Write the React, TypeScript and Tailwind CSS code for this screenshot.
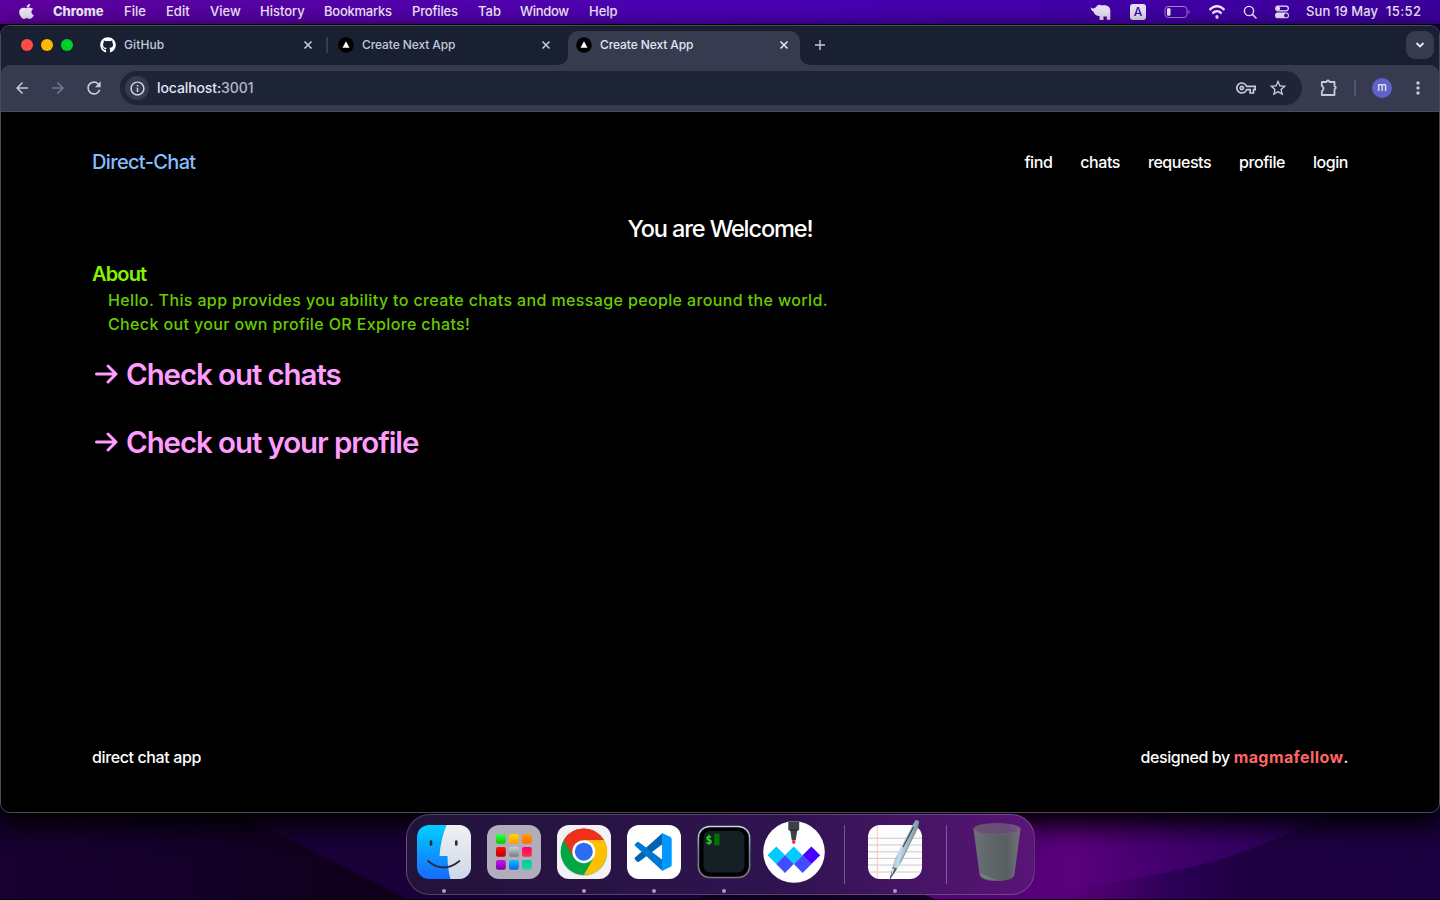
import React from "react";
import { FaApple, FaGithub, FaWifi } from "react-icons/fa";
import {
  MdArrowBack,
  MdArrowForward,
  MdInfoOutline,
  MdMoreVert,
  MdOutlineVpnKey,
  MdRefresh,
  MdStarBorder,
} from "react-icons/md";

function Wallpaper() {
  return (
    <svg className="absolute inset-0 h-full w-full" viewBox="0 0 1440 900" preserveAspectRatio="none">
      <defs>
        <linearGradient id="wBase" x1="0" x2="1" y1="0" y2="0">
          <stop offset="0" stopColor="#180030" />
          <stop offset="0.1" stopColor="#15002c" />
          <stop offset="0.24" stopColor="#10001c" />
          <stop offset="0.5" stopColor="#100020" />
          <stop offset="1" stopColor="#1c0042" />
        </linearGradient>
        <linearGradient id="wUpper" gradientUnits="userSpaceOnUse" x1="930" x2="1310" y1="0" y2="0">
          <stop offset="0" stopColor="#480070" />
          <stop offset="0.38" stopColor="#5a007c" />
          <stop offset="0.65" stopColor="#40006c" />
          <stop offset="1" stopColor="#260058" />
        </linearGradient>
        <linearGradient id="wLower" gradientUnits="userSpaceOnUse" x1="930" x2="1440" y1="0" y2="0">
          <stop offset="0" stopColor="#580078" />
          <stop offset="0.28" stopColor="#580078" />
          <stop offset="0.48" stopColor="#2b0055" />
          <stop offset="0.62" stopColor="#1e0042" />
          <stop offset="1" stopColor="#1b0040" />
        </linearGradient>
      </defs>
      <rect width="1440" height="900" fill="url(#wBase)" />
      <path d="M230 812L290 840L410 900L700 900L700 812Z" fill="#190036" />
      <path d="M900 812H1440V900H936Q925 893 900 890Z" fill="url(#wLower)" />
      <path d="M900 812H1335Q1260 850 1195 866T1070 888L900 890Z" fill="url(#wUpper)" />
      <rect y="899" width="1440" height="1" fill="#08000f" />
    </svg>
  );
}

function ElephantIcon() {
  return (
    <svg className="h-[18px] w-[22px]" viewBox="0 0 22 18" fill="#ebe2f7">
      <path d="M0.500 4.200C2.600 6.200 4.600 5.800 6.500 3.600C7.400 2 9.500 0.800 11.800 2.400C14.500 2 17.500 2.200 19.200 4.200C20.400 5.600 20.500 8 20.300 11V16.800H16.800V13.600H13.500V17H9.600V13.200C6.500 13.200 4.400 11.800 3.300 8.600C2 7.800 0.900 6.400 0.500 4.200Z" />
    </svg>
  );
}

function MenuBar() {
  return (
    <div className="relative flex h-6 shrink-0 items-center bg-gradient-to-r from-[#5c009c] via-[#4a00b4] to-[#3b009c] text-[13px] font-medium text-[#f1e8fb]">
      <div className="w-[53px] pb-0.5 pl-[19px]">
        <FaApple className="h-[17px] w-[15px]" preserveAspectRatio="none" />
      </div>
      <div className="flex pb-px whitespace-nowrap leading-[23px]">
        <div className="w-[71px] font-extrabold tracking-[-0.1px]">Chrome</div>
        <div className="w-[42px]">File</div>
        <div className="w-[44px]">Edit</div>
        <div className="w-[50px]">View</div>
        <div className="w-[64px]">History</div>
        <div className="w-[88px] tracking-[-0.25px]">Bookmarks</div>
        <div className="w-[66px] tracking-[-0.15px]">Profiles</div>
        <div className="w-[42px]">Tab</div>
        <div className="w-[69px] tracking-[-0.3px]">Window</div>
        <div>Help</div>
      </div>
      <div className="ml-auto flex items-center">
        <div className="w-[40px]"><ElephantIcon /></div>
        <div className="mr-[18px] flex h-4 w-4 items-center justify-center rounded-[3px] bg-[#ebe2f7] text-xs font-medium text-[#3d00a0]">A</div>
        <svg className="mr-[18px] h-3 w-[27px]" viewBox="0 0 27 12" fill="none">
          <rect x="1" y="0.5" width="22" height="11" rx="3" stroke="#a484d0" />
          <rect x="3" y="2.3" width="3.5" height="7.4" rx="1" fill="#f1e8fb" />
          <path d="M24.5 4Q27 6 24.5 8Z" fill="#a484d0" />
        </svg>
        <FaWifi className="mr-[18px] mb-px h-[16px] w-4" preserveAspectRatio="none" />
        <svg className="mr-[18px] h-[14px] w-[14px]" viewBox="0 0 14 14" fill="none" stroke="#f1e8fb" strokeLinecap="round">
          <circle cx="6" cy="6" r="4.6" strokeWidth="1.4" />
          <path d="M9.5 9.5L13 13" strokeWidth="1.7" />
        </svg>
        <svg className="mr-[17px] h-[14px] w-[14px]" viewBox="0 0 15 14" fill="none">
          <rect x="0.7" y="0.7" width="13.6" height="5" rx="2.5" stroke="#f1e8fb" strokeWidth="1.3" />
          <circle cx="3.4" cy="3.2" r="2" fill="#f1e8fb" />
          <rect x="0" y="7.6" width="15" height="6.2" rx="3.1" fill="#f1e8fb" />
          <circle cx="11.8" cy="10.7" r="2" fill="#4000a4" />
        </svg>
        <div className="w-[80px] whitespace-nowrap tracking-[0.1px]">Sun 19 May</div>
        <div className="w-[54px] tracking-[0.4px]">15:52</div>
      </div>
    </div>
  );
}

function NextIcon() {
  return (
    <svg className="h-4 w-4 shrink-0" viewBox="0 0 16 16">
      <circle cx="8" cy="8" r="7.8" fill="#000" />
      <path d="M8 4.2L11.5 10.7H4.5Z" fill="#fff" />
    </svg>
  );
}

function CloseIcon() {
  return (
    <svg className="h-[14px] w-[14px]" viewBox="0 0 14 14" stroke="currentColor" strokeWidth="1.6">
      <path d="M3.500 3.500L10.500 10.500M10.500 3.500L3.500 10.500" />
    </svg>
  );
}

function TabStrip() {
  return (
    <div className="flex h-[39px] items-start bg-[#182031] pt-[5px] text-xs text-[#c3c9dc]">
      <div className="flex h-[28px] items-center gap-2 pl-5">
        <div className="h-3 w-3 rounded-full bg-[#ff4b42]" />
        <div className="h-3 w-3 rounded-full bg-[#ffb900]" />
        <div className="h-3 w-3 rounded-full bg-[#00cf2a]" />
      </div>
      <div className="flex h-[28px] w-[255px] items-center pl-[27px]">
        <FaGithub className="h-4 w-4 text-white" />
        <span className="ml-2 flex-1 tracking-[0.1px] [font-weight:450]">GitHub</span>
        <CloseIcon />
        <span className="ml-[11px] h-4 w-[2px] bg-[#353c51]" />
      </div>
      <div className="flex h-[28px] w-[240px] items-center pl-[10px]">
        <NextIcon />
        <span className="ml-2 flex-1 tracking-[-0.1px] [font-weight:450]">Create Next App</span>
        <CloseIcon />
        <span className="w-[15px]" />
      </div>
      <div className="relative flex h-[34px] w-[232px] items-start rounded-t-[10px] bg-[#363b50] pl-2 text-[#e4e6f2]">
        <svg className="absolute -left-[10px] bottom-0 h-[10px] w-[10px]" viewBox="0 0 10 10" fill="#363b50"><path d="M10 0V10H0A10 10 0 0 0 10 0Z" /></svg>
        <svg className="absolute -right-[10px] bottom-0 h-[10px] w-[10px]" viewBox="0 0 10 10" fill="#363b50"><path d="M0 0V10H10A10 10 0 0 1 0 0Z" /></svg>
        <div className="flex h-[28px] flex-1 items-center">
          <NextIcon />
          <span className="ml-2 flex-1 tracking-[-0.1px] [font-weight:450]">Create Next App</span>
          <CloseIcon />
          <span className="w-[9px]" />
        </div>
      </div>
      <div className="flex h-[28px] w-10 items-center justify-center">
        <svg className="h-[10px] w-[10px]" viewBox="0 0 10 10" stroke="#c3c9dc" strokeWidth="1.4"><path d="M5 0V10M0 5H10" /></svg>
      </div>
      <div className="mr-[5px] ml-auto flex h-7 w-7 items-center justify-center rounded-[9px] bg-[#363b50]">
        <svg className="h-2 w-3" viewBox="0 0 12 8" fill="none" stroke="#e4e6f2" strokeWidth="1.8"><path d="M2.5 2L6 5.5L9.5 2" /></svg>
      </div>
    </div>
  );
}

function Toolbar() {
  return (
    <div className="bg-[#182031]">
      <div className="flex h-[46px] items-center rounded-t-[9px] bg-[#363b50] text-[#c7cadd]">
        <MdArrowBack className="ml-3 h-[18px] w-[18px]" />
        <MdArrowForward className="ml-[18px] h-[18px] w-[18px] text-[#757a8e]" />
        <MdRefresh className="ml-[17px] h-[20px] w-[20px]" />
        <div className="ml-[16px] flex h-[34px] w-[1182px] items-center rounded-full bg-[#1e2537] pl-[5px]">
          <div className="flex h-6 w-6 items-center justify-center rounded-full bg-[#363b50]">
            <MdInfoOutline className="h-[17px] w-[17px] text-[#dcdcea]" />
          </div>
          <div className="ml-2 flex-1 text-sm tracking-[-0.1px] text-[#e4e4f1] [font-weight:450]">
            localhost:<span className="text-[#b5b9c9]">3001</span>
          </div>
          <MdOutlineVpnKey className="mr-[12px] h-[20px] w-[20px]" />
          <MdStarBorder className="mr-[14px] h-[20px] w-[20px]" />
        </div>
        <svg className="ml-[18px] h-[18px] w-[18px]" viewBox="0 0 18 18" fill="none" stroke="#c7cadd" strokeWidth="1.8" strokeLinejoin="round">
          <path d="M1.800 3H6.500V2.500Q8 0.500 9.500 2.500V3H14.500V7.300Q17.200 8.800 14.500 10.300V16H1.800V12.400Q5.300 9.500 1.800 6.700Z" />
        </svg>
        <span className="ml-[16px] h-4 w-[2px] bg-[#50566b]" />
        <div className="ml-4 flex h-5 w-5 items-center justify-center rounded-full bg-[#6062c8] pb-px text-[11px] text-white">m</div>
        <MdMoreVert className="ml-4 h-5 w-5" />
      </div>
      <div className="h-px bg-[#484d5e]" />
    </div>
  );
}

function ArrowIcon() {
  return (
    <svg className="h-6 w-[34px] shrink-0" viewBox="0 0 34 24" fill="none" stroke="#ff9cff" strokeWidth="3" strokeLinecap="round" strokeLinejoin="round">
      <path d="M4.500 12H24M16 4L24 12L16 20" />
    </svg>
  );
}

function Page() {
  return (
    <div className="flex flex-1 flex-col bg-black px-[91px] text-white [font-weight:450]">
      <header className="mt-[35px] flex h-[30px] items-center justify-between">
        <div className="text-xl tracking-[-0.65px] text-[#86bdff] [font-weight:550]">Direct-Chat</div>
        <nav className="flex gap-7 whitespace-nowrap tracking-[-0.45px]">
          <a>find</a>
          <a>chats</a>
          <a>requests</a>
          <a>profile</a>
          <a>login</a>
        </nav>
      </header>
      <h1 className="mt-[36px] text-center text-[23.500px] leading-8 tracking-[-1.1px] [font-weight:450]">You are Welcome!</h1>
      <h2 className="mt-[15px] text-xl leading-7 tracking-[-0.85px] text-[#86f400] [font-weight:580]">About</h2>
      <div className="pl-4 leading-6 tracking-[0.37px] text-[#68cc00]">
        <p>Hello. This app provides you ability to create chats and message people around the world.</p>
        <p>Check out your own profile OR Explore chats!</p>
      </div>
      <div className="mt-[20px] flex flex-col gap-8 text-[29.500px] leading-9 tracking-[-1.1px] text-[#ff9cff] [font-weight:570]">
        <a className="flex items-center"><ArrowIcon />Check out chats</a>
        <a className="flex items-center"><ArrowIcon />Check out your profile</a>
      </div>
      <footer className="mt-auto mb-[43px] flex h-6 items-center justify-between tracking-[-0.38px]">
        <div>direct chat app</div>
        <div className="tracking-[-0.42px]">designed by <span className="font-bold tracking-[0.42px] text-[#ff6467]">magmafellow</span>.</div>
      </footer>
    </div>
  );
}

const iconBox = "block h-[54px] w-[54px] overflow-visible";

function FinderIcon() {
  return (
    <svg className={iconBox} viewBox="0 0 54 54">
      <defs>
        <linearGradient id="fB" x2="0" y2="1"><stop stopColor="#00d0ff" /><stop offset="1" stopColor="#1768ff" /></linearGradient>
        <linearGradient id="fW" x2="0" y2="1"><stop stopColor="#f3f0f2" /><stop offset="1" stopColor="#ccd9e8" /></linearGradient>
        <clipPath id="fC"><rect width="54" height="54" rx="12" /></clipPath>
      </defs>
      <g clipPath="url(#fC)">
        <rect width="54" height="54" fill="url(#fB)" />
        <path d="M29.5 0Q23.5 15 22.5 31H30.5Q30.5 44 33.5 54H54V0Z" fill="url(#fW)" />
      </g>
      <g stroke="#242b36" fill="none" strokeLinecap="round">
        <path d="M14 16.5V19.5M39.3 16.5V19.5" strokeWidth="2.6" />
        <path d="M11 36Q26.500 49 42.500 36" strokeWidth="1.7" />
      </g>
    </svg>
  );
}

const tiles: [number, number, string, string][] = [
  [9, 9, "#40ff50", "#00c800"],
  [22, 9, "#ffd800", "#ff9c00"],
  [35, 9, "#ffa000", "#ff6c00"],
  [9, 22, "#ff1010", "#b80000"],
  [22, 22, "#c8d4d8", "#747b7e"],
  [35, 22, "#ff0068", "#ff304c"],
  [9, 35, "#c818e8", "#7c00b0"],
  [22, 35, "#00c4ff", "#1060f0"],
  [35, 35, "#00c898", "#20d8a8"],
];

function LaunchpadIcon() {
  return (
    <svg className={iconBox} viewBox="0 0 54 54">
      <rect width="54" height="54" rx="12" fill="#b2adbb" />
      {tiles.map(([x, y, a, b], i) => (
        <g key={i}>
          <linearGradient id={`lp${i}`} x2="0" y2="1"><stop stopColor={a} /><stop offset="1" stopColor={b} /></linearGradient>
          <rect x={x} y={y} width="9.8" height="9.8" rx="2" fill={`url(#lp${i})`} />
        </g>
      ))}
    </svg>
  );
}

function ChromeIcon() {
  return (
    <svg className={iconBox} viewBox="0 0 54 54">
      <rect width="54" height="54" rx="12" fill="#f2f1f4" />
      <circle cx="27" cy="27.800" r="23.3" fill="#000" opacity="0.15" />
      <g transform="translate(26.800 26.700)">
        <circle r="23.2" fill="#00a544" />
        <path d="M0 -11.6H20.100A23.200 23.200 0 0 1 0 23.200L10.050 5.8Z" fill="#ffc000" />
        <path d="M-20.100 -11.600A23.200 23.200 0 0 1 20.100 -11.600H0L-10.050 5.800Z" fill="#f03018" />
        <circle r="11.5" fill="#fff" />
        <circle r="9" fill="#2c6cf0" />
      </g>
    </svg>
  );
}

function CodeIcon() {
  return (
    <svg className={iconBox} viewBox="0 0 54 54">
      <rect width="54" height="54" rx="12" fill="#fff" />
      <path d="M35 8.500V19.500L12 36.800Q11 37.400 10 36.500L8 34.600Q7.200 33.500 8 32.600Z" fill="#0063b4" />
      <path d="M8 20.800Q7.200 19.800 8 18.900L10 17.200Q11 16.400 12 17.200L35 34.500V45.500Z" fill="#0078d2" />
      <path d="M35 8L43.200 11.800Q44.700 12.600 44.700 14.200V39.800Q44.700 41.400 43.200 42.100L35 46Z" fill="#0098ff" />
    </svg>
  );
}

function TerminalIcon() {
  return (
    <svg className={iconBox} viewBox="0 0 54 54">
      <defs><linearGradient id="tB" x2="0" y2="1"><stop stopColor="#c4dbe8" /><stop offset="0.5" stopColor="#68808c" /><stop offset="1" stopColor="#7b7680" /></linearGradient></defs>
      <rect x="0.600" y="0.700" width="52.800" height="52.600" rx="12" fill="url(#tB)" />
      <rect x="2.200" y="2.200" width="49.600" height="49.600" rx="10.500" fill="#000" />
      <rect x="6.500" y="6" width="41" height="41.500" rx="6.500" fill="#142024" />
      <text x="8.600" y="18.500" fontSize="11.500" fontWeight="700" fontFamily="DejaVu Sans Mono" fill="#1edc28">$</text>
      <rect x="17.300" y="8.800" width="5.200" height="11.400" fill="#007400" />
    </svg>
  );
}

function MarkerIcon() {
  return (
    <svg className={iconBox} viewBox="0 0 54 54">
      <circle cx="27" cy="27" r="30.8" fill="#fff" />
      <path d="M9.300 21.500L18.100 30.300L9.300 39.100L0.500 30.300ZM26.700 21.500L35.500 30.300L26.700 39.100L17.900 30.300Z" fill="#00ccff" />
      <path d="M18 30.300L26.800 39.100L18 47.900L9.200 39.100ZM35.600 30.300L44.400 39.100L35.600 47.900L26.800 39.100Z" fill="#414dff" />
      <path d="M44.400 21.500L53.200 30.300L44.400 39.100L35.600 30.300Z" fill="#4700ff" />
      <path d="M21.300 -3.300Q27 -4.300 32.200 -3.300V5H30.300L28.800 15H24.700L23.200 5H21.300Z" fill="#3a4247" />
      <path d="M22.300 5.300H31.200" stroke="#1e2427" />
      <path d="M25 15.200H28.500L28.100 18L26.700 19.300L25.400 18Z" fill="#ff2020" />
    </svg>
  );
}

function NotesIcon() {
  return (
    <svg className={iconBox} viewBox="0 0 54 54">
      <defs><linearGradient id="pen" x1="0" x2="1" y1="0" y2="0.400"><stop stopColor="#71889a" /><stop offset="0.500" stopColor="#bcdcf0" /><stop offset="1" stopColor="#687480" /></linearGradient></defs>
      <rect width="54" height="54" rx="12" fill="#fdfdfd" />
      <path d="M0 13.200H54M0 20H54M0 26.800H54M0 33.400H54M0 40H54M2 47H52" stroke="#c4c4c8" strokeWidth="0.900" />
      <path d="M9.300 1V53" stroke="#ffc2bf" />
      <path d="M51.500 1L32.500 39L23 54L47 11Z" fill="#000" opacity="0.180" />
      <path d="M45.500 -1.500L48 -5.300L51.300 -3.800L50.300 1.500L33.500 36.500L29.500 43L21.200 55.700L24.800 41L27 33.500Z" fill="url(#pen)" />
      <path d="M45.500 2L35 22" stroke="#354652" strokeWidth="1.200" />
      <path d="M50 2L32 38" stroke="#887b70" strokeWidth="0.700" />
      <path d="M25 42L29 43.500L21.200 55.700Z" fill="#494f54" />
      <path d="M24 44.500L27 42.500L23.500 51Z" fill="#dfe6ea" />
    </svg>
  );
}

function TrashIcon() {
  return (
    <svg className={iconBox} viewBox="0 0 54 54">
      <defs>
        <linearGradient id="trA"><stop stopColor="#6d7079" /><stop offset="0.250" stopColor="#626a6d" /><stop offset="0.700" stopColor="#565e60" /><stop offset="1" stopColor="#737179" /></linearGradient>
        <linearGradient id="trB"><stop stopColor="#6b5373" /><stop offset="0.700" stopColor="#684a75" /><stop offset="1" stopColor="#795880" /></linearGradient>
      </defs>
      <path d="M3.500 4L9.500 49Q10 56 27 56T44.500 49L50.500 4Z" fill="url(#trA)" />
      <ellipse cx="27" cy="4" rx="23.400" ry="5.500" fill="url(#trB)" stroke="#77707d" strokeWidth="0.500" />
      <path d="M10 48Q12 54.500 27 55Q17 52 10 48Z" fill="#9a9c9f" opacity="0.500" />
    </svg>
  );
}

function DockItem({ children, open }: { children: React.ReactNode; open?: boolean }) {
  return (
    <div className="flex w-[54px] flex-col items-center">
      {children}
      {open && <span className="mt-[10px] h-1 w-1 rounded-full bg-[#b394cf]" />}
    </div>
  );
}

function Dock() {
  return (
    <div className="relative mt-px flex h-[81px] w-[629px] self-center rounded-[24px] border border-white/20 bg-gradient-to-r from-[#22133a] via-[#301350] via-60% to-[#5a1478] pt-[10px] pl-[10px]">
      <div className="flex gap-4">
        <DockItem open><FinderIcon /></DockItem>
        <DockItem><LaunchpadIcon /></DockItem>
        <DockItem open><ChromeIcon /></DockItem>
        <DockItem open><CodeIcon /></DockItem>
        <DockItem open><TerminalIcon /></DockItem>
        <DockItem><MarkerIcon /></DockItem>
      </div>
      <span className="mr-[23px] ml-[23px] h-[59px] w-px bg-white/30" />
      <DockItem open><NotesIcon /></DockItem>
      <span className="mr-[23px] ml-[24px] h-[59px] w-px bg-white/30" />
      <DockItem><TrashIcon /></DockItem>
    </div>
  );
}

export default function App() {
  return (
    <div className="relative flex h-[900px] w-[1440px] flex-col overflow-hidden bg-[#180030] font-['Inter',sans-serif]">
      <Wallpaper />
      <MenuBar />
      <div className="relative h-px shrink-0 bg-black" />
      <main className="relative flex h-[788px] shrink-0 flex-col overflow-hidden rounded-[10px] border border-[#4b4b50] shadow-[0_10px_24px_4px_rgba(0,0,0,0.95)]">
        <TabStrip />
        <Toolbar />
        <Page />
      </main>
      <Dock />
    </div>
  );
}
